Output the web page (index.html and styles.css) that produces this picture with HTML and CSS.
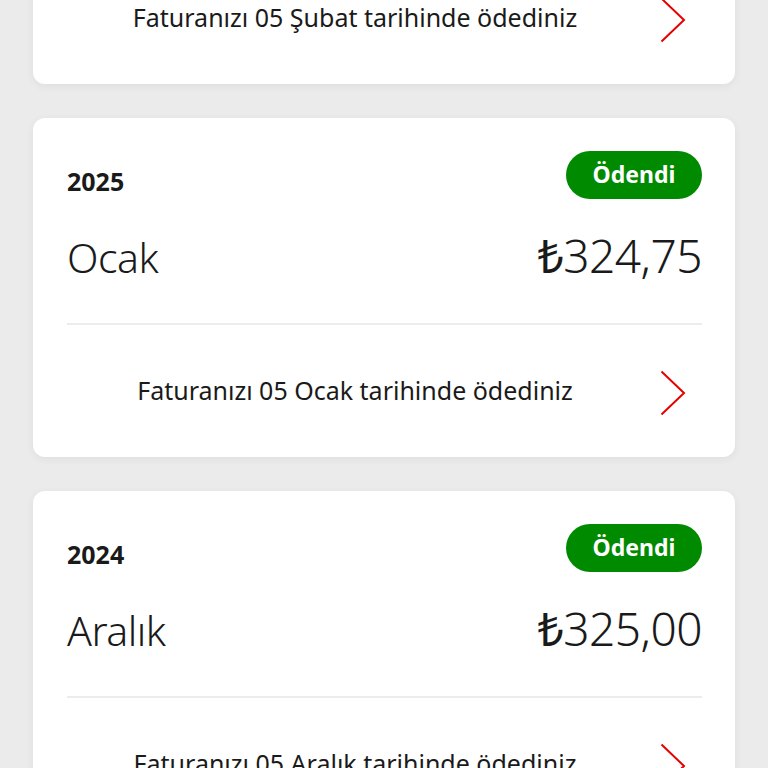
FILE: index.html
```html
<!DOCTYPE html>
<html lang="tr">
<head>
<meta charset="utf-8">
<title>Faturalar</title>
<link rel="stylesheet" href="styles.css">
</head>
<body>
<main class="list">
  <section class="card">
    <div class="head">
      <span class="year">2025</span>
      <span class="badge">Ödendi</span>
    </div>
    <div class="month-row">
      <span class="month">Şubat</span>
      <span class="amount"><span class="lira">₺</span>324,75</span>
    </div>
    <div class="footer">
      <span class="note">Faturanızı 05 Şubat tarihinde ödediniz</span>
      <span class="chev"><svg width="26" height="46" viewBox="0 0 26 46"><path d="M1.5 1.5 L24 23 L1.5 44.5" fill="none" stroke="#e60000" stroke-width="2"/></svg></span>
    </div>
  </section>
  <section class="card">
    <div class="head">
      <span class="year">2025</span>
      <span class="badge">Ödendi</span>
    </div>
    <div class="month-row">
      <span class="month">Ocak</span>
      <span class="amount"><span class="lira">₺</span>324,75</span>
    </div>
    <div class="footer">
      <span class="note">Faturanızı 05 Ocak tarihinde ödediniz</span>
      <span class="chev"><svg width="26" height="46" viewBox="0 0 26 46"><path d="M1.5 1.5 L24 23 L1.5 44.5" fill="none" stroke="#e60000" stroke-width="2"/></svg></span>
    </div>
  </section>
  <section class="card">
    <div class="head">
      <span class="year">2024</span>
      <span class="badge">Ödendi</span>
    </div>
    <div class="month-row">
      <span class="month">Aralık</span>
      <span class="amount"><span class="lira">₺</span>325,00</span>
    </div>
    <div class="footer">
      <span class="note">Faturanızı 05 Aralık tarihinde ödediniz</span>
      <span class="chev"><svg width="26" height="46" viewBox="0 0 26 46"><path d="M1.5 1.5 L24 23 L1.5 44.5" fill="none" stroke="#e60000" stroke-width="2"/></svg></span>
    </div>
  </section>
</main>
</body>
</html>
```

FILE: styles.css
```css
html, body {
  margin: 0;
  padding: 0;
  background: #ebebeb;
  font-family: "Noto Sans", "Open Sans", sans-serif;
  color: #1a1a1a;
  overflow: hidden;
  height: 768px;
}

.list {
  display: flex;
  flex-direction: column;
  gap: 34px;
  padding: 0 33px;
  margin-top: -255px;
}

.card {
  background: #ffffff;
  border-radius: 12px;
  box-shadow: 0 2px 8px rgba(0, 0, 0, 0.06);
  padding: 33px 33px 0 34px;
  height: 339px;
  box-sizing: border-box;
  display: flex;
  flex-direction: column;
}

.head {
  display: flex;
  justify-content: space-between;
  align-items: flex-end;
  height: 48px;
}

.year {
  font-weight: 700;
  font-size: 25px;
  line-height: 1;
  margin-bottom: 5px;
}

.badge {
  background: #008a00;
  color: #ffffff;
  font-weight: 700;
  font-size: 23px;
  height: 48px;
  width: 136px;
  border-radius: 24px;
  display: flex;
  align-items: center;
  justify-content: center;
  box-sizing: border-box;
  padding-bottom: 3px;
}

.month-row {
  display: flex;
  justify-content: space-between;
  align-items: baseline;
  margin-top: 26px;
  height: 60px;
  line-height: 60px;
}

.month {
  font-size: 41px;
  font-weight: 300;
  letter-spacing: -0.5px;
}

.amount {
  font-size: 46px;
  font-weight: 300;
  letter-spacing: -0.5px;
}

.lira {
  font-weight: 400;
}

.footer {
  margin-top: 38px;
  border-top: 2px solid #ececec;
  flex: 1;
  display: flex;
  align-items: center;
}

.note {
  flex: 1;
  text-align: center;
  font-size: 25px;
  padding-bottom: 2px;
}

.chev {
  width: 59px;
  display: flex;
  justify-content: center;
  padding-top: 4px;
}
```
